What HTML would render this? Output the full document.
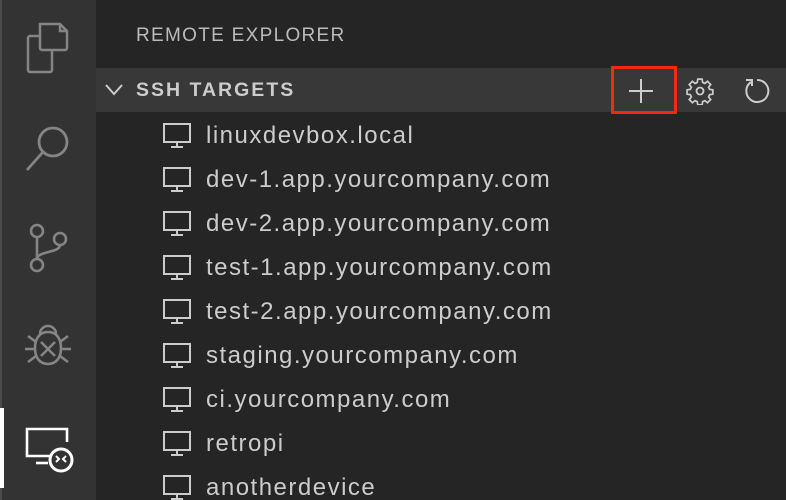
<!DOCTYPE html><html><head><style>
html,body{margin:0;width:786px;height:500px;overflow:hidden}
body{background:#252526;font-family:"Liberation Sans",sans-serif;position:relative}
.ab{position:absolute;left:0;top:0;width:96px;height:500px;background:#333333}
.ab svg{position:absolute}
.t{position:absolute;left:136px;top:25px;color:#bbbbbb;font-size:19px;letter-spacing:1.3px}
.hdr{position:absolute;left:96px;top:68px;width:690px;height:44px;background:#383838}
.hdr span{position:absolute;left:40px;top:11px;color:#cccccc;font-weight:bold;font-size:19.5px;letter-spacing:2px}
.red{position:absolute;left:611px;top:66px;width:60px;height:42px;border:3px solid #f02b0e}
.it{position:absolute;left:163px;height:44px;color:#cccccc;font-size:24px;line-height:44px;letter-spacing:1.5px}
.it svg{position:absolute;left:0;top:10px}
.it span{position:absolute;left:43px;top:1px;white-space:nowrap}
</style></head><body>
<div class="ab">
<div style="position:absolute;left:0;top:0;width:2px;height:500px;background:#4a4a4a"></div>
<div style="position:absolute;left:0;top:408px;width:4px;height:80px;background:#fff"></div>
<svg style="left:25px;top:22px" width="46" height="52" viewBox="0 0 46 52" fill="none" stroke="#858585" stroke-width="2.5"><path d="M15 2h20l7 7v17a2 2 0 0 1-2 2H17a2 2 0 0 1-2-2z M35 2v7h7"/><path d="M15 14H5a2 2 0 0 0-2 2v32a2 2 0 0 0 2 2h20a2 2 0 0 0 2-2V28"/></svg>
<svg style="left:25px;top:122px" width="48" height="50" viewBox="0 0 48 50" fill="none" stroke="#858585" stroke-width="2.8"><circle cx="28" cy="20" r="14"/><path d="M18 30L2 48"/></svg>
<svg style="left:28px;top:222px" width="40" height="52" viewBox="0 0 40 52" fill="none" stroke="#858585" stroke-width="2.6"><circle cx="9" cy="9" r="6"/><circle cx="32" cy="17" r="6"/><circle cx="9" cy="43" r="6"/><path d="M9 15v22M32 23c0 8-23 6-23 14"/></svg>
<svg style="left:23px;top:322px" width="50" height="52" viewBox="0 0 50 52" fill="none" stroke="#858585" stroke-width="2.6"><path d="M17 12a8 8 0 0 1 16 0"/><path d="M25 10c-8 0-13 6-13 16s5 16 13 16 13-6 13-16-5-16-13-16z"/><path d="M18 20l14 14M32 20L18 34M2 27h10M38 27h10M5 14l8 6M45 14l-8 6M5 40l8-6M45 40l-8-6"/></svg>
<svg style="left:24px;top:426px" width="50" height="48" viewBox="0 0 50 48" fill="none" stroke="#ffffff" stroke-width="2.6"><path d="M26 30H3V3h40v13"/><path d="M12 37h12"/><circle cx="37" cy="34" r="11" fill="#333" stroke-width="3"/><path d="M32 30l3 3-3 3M42 30l-3 3 3 3" stroke-width="2"/></svg>
</div>
<div class="t">REMOTE EXPLORER</div>
<div class="hdr"><svg style="position:absolute;left:8px;top:15px" width="20" height="14" viewBox="0 0 20 14" fill="none" stroke="#ccc" stroke-width="2"><path d="M2 2l8 9 8-9"/></svg><span>SSH TARGETS</span>
<svg style="position:absolute;left:532px;top:10px" width="26" height="26" viewBox="0 0 26 26" stroke="#ccc" stroke-width="2"><path d="M13 1v24M1 13h24"/></svg>
<svg style="position:absolute;left:590px;top:9px" width="28" height="28" viewBox="0 0 24 24" fill="none" stroke="#ccc" stroke-width="1.6"><path d="M10 2h4l.5 3 2 1 2.5-2 3 3-2 2.5 1 2 3 .5v4l-3 .5-1 2 2 2.5-3 3-2.5-2-2 1-.5 3h-4l-.5-3-2-1-2.5 2-3-3 2-2.5-1-2-3-.5v-4l3-.5 1-2-2-2.5 3-3 2.5 2 2-1z" transform="scale(.92) translate(1 0)"/><circle cx="12" cy="12" r="3"/></svg>
<svg style="position:absolute;left:646px;top:9px" width="28" height="28" viewBox="0 0 28 28" fill="none" stroke="#ccc" stroke-width="2"><path d="M9 5a11 11 0 1 0 6-2"/><path d="M4 3h6v6"/></svg>
</div>
<div class="red"></div>
<div class="it" style="top:113px"><svg width="28" height="26" viewBox="0 0 28 26" fill="none" stroke="#ccc" stroke-width="2"><rect x="1" y="1" width="26" height="18"/><path d="M14 19v5M8 24h12"/></svg><span>linuxdevbox.local</span></div>
<div class="it" style="top:157px"><svg width="28" height="26" viewBox="0 0 28 26" fill="none" stroke="#ccc" stroke-width="2"><rect x="1" y="1" width="26" height="18"/><path d="M14 19v5M8 24h12"/></svg><span>dev-1.app.yourcompany.com</span></div>
<div class="it" style="top:201px"><svg width="28" height="26" viewBox="0 0 28 26" fill="none" stroke="#ccc" stroke-width="2"><rect x="1" y="1" width="26" height="18"/><path d="M14 19v5M8 24h12"/></svg><span>dev-2.app.yourcompany.com</span></div>
<div class="it" style="top:245px"><svg width="28" height="26" viewBox="0 0 28 26" fill="none" stroke="#ccc" stroke-width="2"><rect x="1" y="1" width="26" height="18"/><path d="M14 19v5M8 24h12"/></svg><span>test-1.app.yourcompany.com</span></div>
<div class="it" style="top:289px"><svg width="28" height="26" viewBox="0 0 28 26" fill="none" stroke="#ccc" stroke-width="2"><rect x="1" y="1" width="26" height="18"/><path d="M14 19v5M8 24h12"/></svg><span>test-2.app.yourcompany.com</span></div>
<div class="it" style="top:333px"><svg width="28" height="26" viewBox="0 0 28 26" fill="none" stroke="#ccc" stroke-width="2"><rect x="1" y="1" width="26" height="18"/><path d="M14 19v5M8 24h12"/></svg><span>staging.yourcompany.com</span></div>
<div class="it" style="top:377px"><svg width="28" height="26" viewBox="0 0 28 26" fill="none" stroke="#ccc" stroke-width="2"><rect x="1" y="1" width="26" height="18"/><path d="M14 19v5M8 24h12"/></svg><span>ci.yourcompany.com</span></div>
<div class="it" style="top:421px"><svg width="28" height="26" viewBox="0 0 28 26" fill="none" stroke="#ccc" stroke-width="2"><rect x="1" y="1" width="26" height="18"/><path d="M14 19v5M8 24h12"/></svg><span>retropi</span></div>
<div class="it" style="top:465px"><svg width="28" height="26" viewBox="0 0 28 26" fill="none" stroke="#ccc" stroke-width="2"><rect x="1" y="1" width="26" height="18"/><path d="M14 19v5M8 24h12"/></svg><span>anotherdevice</span></div>
</body></html>
